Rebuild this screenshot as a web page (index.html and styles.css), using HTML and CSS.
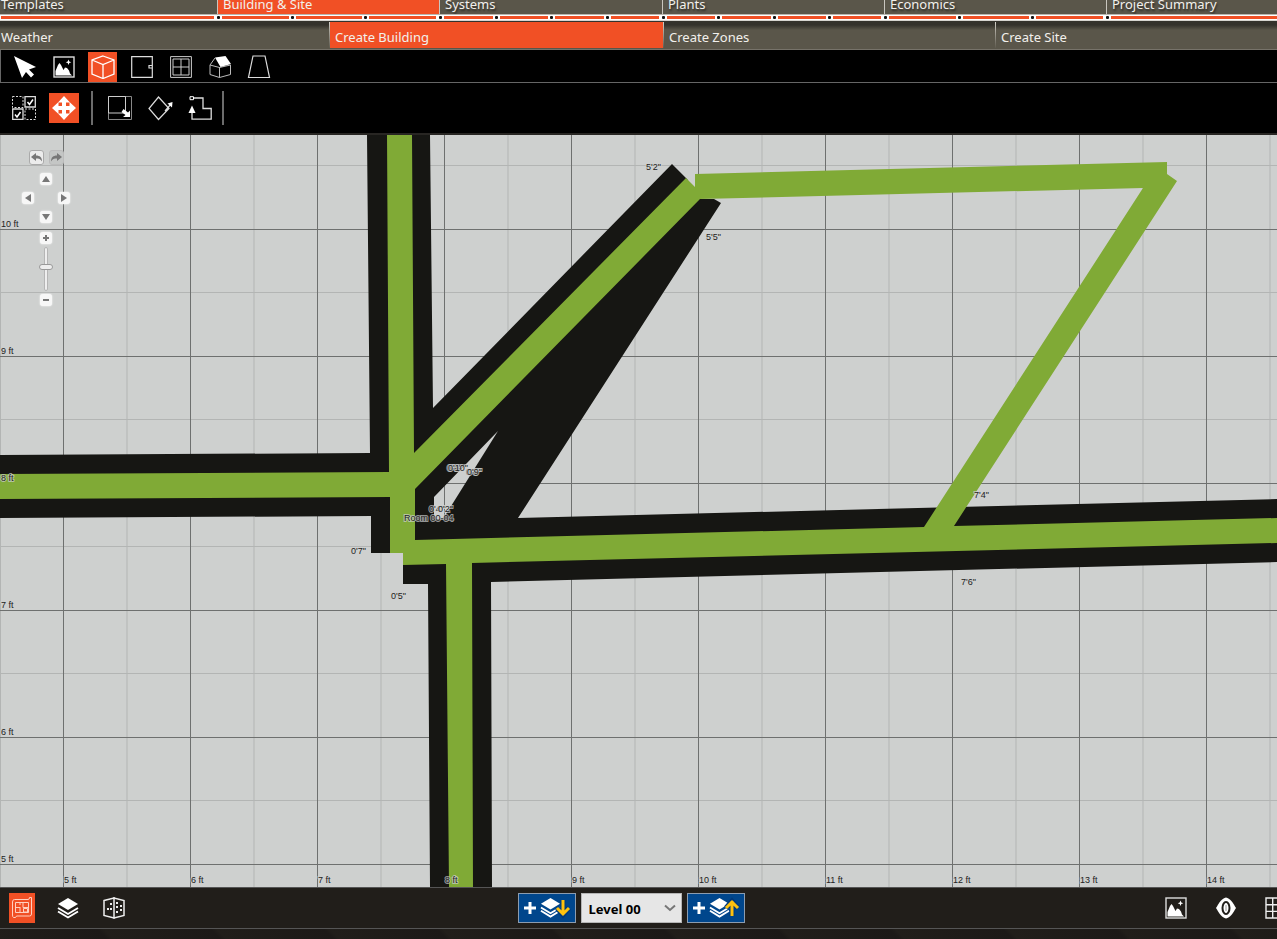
FILE: index.html
```html
<!DOCTYPE html>
<html lang="en">
<head>
<meta charset="utf-8">
<title>Building &amp; Site - Create Building</title>
<link rel="stylesheet" href="styles.css">
</head>
<body>
<svg class="defs" aria-hidden="true">
  <symbol id="picture" viewBox="0 0 22 22"><rect x="1" y="1" width="20" height="20" fill="none" stroke="#ddd" stroke-width="1.4"/><path d="M2.500 19.500V15L5 9l1.500-2L8 9l2.500 5 1.500-2.500 2 .5 2 2.500 1 3 2 2zM15.500 3.500l.8 2 2 .8-2 .8-.8 2-.8-2-2-.8 2-.8z" fill="#fff"/></symbol>
  <symbol id="layers" viewBox="0 0 22 22"><path d="M11 1l10 6-10 6L1 7z" fill="#fff"/><path d="M1 11l10 6 10-6M1 14.500l10 6 10-6" fill="none" stroke="#fff" stroke-width="1.900"/></symbol>
</svg>

<nav class="main-tabs" aria-label="Project steps">
  <a href="#">Templates</a>
  <a href="#" class="active">Building &amp; Site</a>
  <a href="#">Systems</a>
  <a href="#">Plants</a>
  <a href="#">Economics</a>
  <a href="#">Project Summary</a>
</nav>
<div class="progress" aria-hidden="true">
  <div><i></i></div>
  <div><i></i><i></i><i></i></div>
  <div><i></i><i></i><i></i><i></i></div>
  <div><i></i><i></i><i></i><i></i></div>
  <div><i></i><i></i><i></i></div>
  <div><i></i></div>
</div>
<nav class="sub-tabs" aria-label="Building steps">
  <a href="#">Weather</a>
  <a href="#" class="active">Create Building</a>
  <a href="#">Create Zones</a>
  <a href="#">Create Site</a>
</nav>

<div class="toolbar objects" role="toolbar" aria-label="Objects">
  <button aria-label="Select"><svg width="24" height="24" viewBox="0 0 24 24"><path d="M1 1l22 11-7 2.500 5 5-3 3-5-5.500L9 23z" fill="#fff"/></svg></button>
  <button aria-label="Picture"><svg width="22" height="22"><use href="#picture"/></svg></button>
  <button class="active" aria-label="Building block"><svg width="24" height="24" viewBox="0 0 24 24"><path d="M12 1l11 4v14l-11 4.500L1 19V5zM1 5l11 4.500L23 5M12 9.500v14" fill="none" stroke="#fff" stroke-width="1.300"/></svg></button>
  <button aria-label="Door"><svg width="22" height="22" viewBox="0 0 22 22"><path d="M.7.700h20.600v20.600H.7zM21 9.500h-3v2.500h3" fill="none" stroke="#ddd" stroke-width="1.200"/></svg></button>
  <button aria-label="Window"><svg width="22" height="22" viewBox="0 0 22 22"><path d="M.6.6h20.800v20.800H.6zM3 3h16v16H3zM11 3v16M3 11h16" fill="none" stroke="#ccc"/></svg></button>
  <button aria-label="Roof"><svg width="22" height="22" viewBox="0 0 22 22"><path d="M1 9v9.500l9.500 3 11-3V9M10.500 11v10.500M1 9l9.500 2.500M1 9l5-7M10.500 11.500L21.500 9" fill="none" stroke="#bbb"/><path d="M6 1.500L16.500 0 22 8l-10.500 3z" fill="#fff"/></svg></button>
  <button aria-label="Shade"><svg width="24" height="24" viewBox="0 0 24 24"><path d="M6 1h12l4.500 21.500h-21z" fill="none" stroke="#ddd" stroke-width="1.200"/></svg></button>
</div>
<div class="toolbar edits" role="toolbar" aria-label="Editing">
  <div class="group">
    <button aria-label="Multiple selection"><svg width="24" height="24" viewBox="0 0 24 24" fill="none" stroke="#ddd"><path d="M.5.5H11v11H.5zM13 13h10.500v10.500H13z" stroke-dasharray="2 1.500"/><path d="M13 .7h10.300V11H13zM.7 13H11v10.300H.7z" stroke-width="1.300"/><path d="M15.500 6l2 2.500L21 3.500M3 18.500l2 2.500 3.500-5" stroke="#fff" stroke-width="1.500"/></svg></button>
    <button class="active" aria-label="Move"><svg width="24" height="24" viewBox="0 0 24 24"><path d="M12 0l6 6.500h-4V10h3.500V6L24 12l-6.500 6v-4H14v3.500h4L12 24l-6-6.500h4V14H6.500v4L0 12l6.500-6v4H10V6.500H6z" fill="#fff"/></svg></button>
  </div>
  <span class="sep"></span>
  <div class="group">
    <button aria-label="Resize"><svg width="24" height="24" viewBox="0 0 24 24"><path d="M.5.500h23v23H.5z" fill="none" stroke="#888"/><path d="M.5.500H17.500v16.500H.5z" fill="none" stroke="#ccc"/><path d="M15.500 13l4.500 3.500 2-2V21h-7l2.500-2-4-3z" fill="#fff"/></svg></button>
    <button aria-label="Rotate"><svg width="26" height="26" viewBox="0 0 26 26"><path d="M11.500 2L22 13.500 11.500 24.500 2 13.500zM18 16l6-7" fill="none" stroke="#ddd" stroke-width="1.200"/><path d="M20.500 8.500L25.500 7l-.5 5.500z" fill="#fff"/></svg></button>
    <button aria-label="Edit outline"><svg width="24" height="24" viewBox="0 0 24 24"><path d="M4 2h11v10.500h8.200v10.700H4V17" fill="none" stroke="#ddd" stroke-width="1.300"/><path d="M.5 17L4 9.500 7.500 17z" fill="#fff"/><path d="M2 .7h3.500v3H2z" fill="#000" stroke="#fff"/></svg></button>
  </div>
  <span class="sep end"></span>
</div>

<main class="canvas">
  <svg class="drawing" viewBox="0 135 1277 752" preserveAspectRatio="xMinYMin slice" role="img" aria-label="Floor plan">
    <path class="minor" d="M.5 135v752M127 135v752M254 135v752M381 135v752M508 135v752M635 135v752M762 135v752M889 135v752M1016 135v752M1143 135v752M1270 135v752M0 165.500h1277M0 292.500h1277M0 419.500h1277M0 546.500h1277M0 673.500h1277M0 800.500h1277"/>
    <path class="major" d="M63.500 135v752M190.500 135v752M317.500 135v752M444.500 135v752M571.500 135v752M698.500 135v752M825.500 135v752M952.500 135v752M1079.500 135v752M1206.500 135v752M0 229.500h1277M0 356.500h1277M0 483.500h1277M0 610.500h1277M0 737.500h1277M0 864.500h1277"/>
    <path class="wall" fill-rule="evenodd" d="M367 135H430L433 408L672 164L687 179L700 199H714L721 203L518 518L1277 499V562L491 582L492 887H430L428 584H403V553H371V516L0 518V455L370 453ZM498 431L434 497V519H443Z"/>
    <path class="core" d="M387 135H412L414 453L686 178L695 187V174L1167 162V174L1177 181L954 526L1277 518V543L472 563L473 887H449L446 564L403 565V553H390V497L0 499V474L389 472ZM700 199L415 489V540L924 527L1143 188Z"/>
    <g class="labels">
      <text x="1" y="227">10 ft</text><text x="1" y="354">9 ft</text><text x="1" y="481">8 ft</text><text x="1" y="608">7 ft</text><text x="1" y="735">6 ft</text><text x="1" y="862">5 ft</text>
      <text x="64" y="883">5 ft</text><text x="191" y="883">6 ft</text><text x="318" y="883">7 ft</text><text x="445" y="883">8 ft</text><text x="572" y="883">9 ft</text><text x="699" y="883">10 ft</text><text x="826" y="883">11 ft</text><text x="953" y="883">12 ft</text><text x="1080" y="883">13 ft</text><text x="1207" y="883">14 ft</text>
      <text x="646" y="170">5'2"</text><text x="706" y="240">5'5"</text><text x="974" y="498">7'4"</text><text x="961" y="585">7'6"</text><text x="351" y="554">0'7"</text><text x="391" y="599">0'5"</text>
      <text x="447" y="471">0'9"</text><text x="448" y="471">0'10"</text><text x="466" y="475">0'8"</text><text x="467" y="475">0'9"</text><text x="429" y="512">0'4"</text><text x="438" y="512">0'2"</text><text x="404" y="521">Room 00-04</text>
    </g>
  </svg>
  <div class="view-controls">
    <div class="history">
      <button aria-label="Undo"><svg width="11" height="9" viewBox="0 0 11 9"><path d="M0 4L5 0v2.500c4 0 6 2 6 6C9.500 6 8 5.500 5 5.500V8z"/></svg></button>
      <button class="off" aria-label="Redo"><svg width="11" height="9" viewBox="0 0 11 9"><path d="M11 4L6 0v2.500C2 2.500 0 4.500 0 8.500 1.500 6 3 5.500 6 5.500V8z"/></svg></button>
    </div>
    <div class="pan">
      <button class="up" aria-label="Pan up"><svg width="8" height="6" viewBox="0 0 8 6"><path d="M4 0l4 6H0z"/></svg></button>
      <button class="left" aria-label="Pan left"><svg width="6" height="8" viewBox="0 0 6 8"><path d="M0 4l6-4v8z"/></svg></button>
      <button class="right" aria-label="Pan right"><svg width="6" height="8" viewBox="0 0 6 8"><path d="M6 4L0 0v8z"/></svg></button>
      <button class="down" aria-label="Pan down"><svg width="8" height="6" viewBox="0 0 8 6"><path d="M4 6l4-6H0z"/></svg></button>
    </div>
    <div class="zoom">
      <button aria-label="Zoom in"><svg width="8" height="8" viewBox="0 0 8 8"><path d="M3 1h2v2h2v2H5v2H3V5H1V3h2z"/></svg></button>
      <input type="range" aria-label="Zoom level" min="0" max="100" value="45">
      <button aria-label="Zoom out"><svg width="8" height="8" viewBox="0 0 8 8"><path d="M1 3h6v2H1z"/></svg></button>
    </div>
  </div>
</main>

<footer class="bottom-bar">
  <div class="views">
    <button class="active" aria-label="Plan view"><svg width="22" height="22" viewBox="0 0 22 22" fill="none" stroke="#ffd0c0"><path d="M1.500 5q0-2.500 2-2.500H17q1.500 0 1.500-2h2V17q0 2-2 2H6q-1 0-1.500 1.500h-2Q1.500 20 1.500 18z"/><path d="M4.500 5.500h13v10h-13zM4.500 10.500h4.500M9 5.500v2.500M9 10v5.500M12 5.500v5h5.500" /><path d="M12.500 11.500h4V15h-4z"/></svg></button>
    <button aria-label="Levels"><svg width="22" height="22"><use href="#layers"/></svg></button>
    <button aria-label="Building view"><svg width="22" height="22" viewBox="0 0 22 22"><path d="M11 0v22M1 3.500l10-2.500 10 2.500v15L11 21 1 18.500z" fill="none" stroke="#eee" stroke-width="1.500"/><path d="M7 6h2v2H7zM4 11h2v2H4zM7 11h2v2H7zM13 5h2v2h-2zM13 9h2v2h-2zM17 8h2v2h-2zM13 14h2v2h-2zM17 12h2v2h-2z" fill="#eee"/></svg></button>
  </div>
  <div class="levels">
    <button class="add" aria-label="Add level below"><svg width="48" height="24" viewBox="0 0 48 24"><path d="M7 6v12M1 12h12" stroke="#fff" stroke-width="3"/><use href="#layers" x="17" y="1" width="21" height="21"/><path d="M40 4v14M34 12l6 7 6-7" fill="none" stroke="#00397a" stroke-width="5"/><path d="M40 4v14M34 12l6 6 6-6" fill="none" stroke="#ffc20e" stroke-width="3"/></svg></button>
    <div class="select-box">
      <select aria-label="Level"><option>Level 00</option></select>
      <svg width="12" height="8" viewBox="0 0 12 8"><path d="M1 1.500l5 4.500 5-4.500" fill="none" stroke="#777" stroke-width="2"/></svg>
    </div>
    <button class="add" aria-label="Add level above"><svg width="48" height="24" viewBox="0 0 48 24"><path d="M7 6v12M1 12h12" stroke="#fff" stroke-width="3"/><use href="#layers" x="17" y="1" width="21" height="21"/><path d="M40 20V5M34 12l6-7 6 7" fill="none" stroke="#00397a" stroke-width="5"/><path d="M40 20V5M34 12l6-6 6 6" fill="none" stroke="#ffc20e" stroke-width="3"/></svg></button>
  </div>
  <div class="display">
    <button aria-label="Show picture"><svg width="22" height="22"><use href="#picture"/></svg></button>
    <button aria-label="Visibility"><svg width="22" height="22" viewBox="0 0 22 22"><path d="M11 .500C15 1 18 6 21 11c-3 5-6 10-10 10.500C7 21 4 16 1 11 4 6 7 1 11 .500z" fill="#fff"/><ellipse cx="11" cy="11" rx="3.500" ry="6" fill="#fff" stroke="#211e1a" stroke-width="2"/><path d="M11 8v6" stroke="#999" stroke-width="1"/></svg></button>
    <button aria-label="Grid"><svg width="22" height="22" viewBox="0 0 22 22"><path d="M1 1h20v20H1zM7.700 1v20M14.400 1v20M1 7.700h20M1 14.400h20" fill="none" stroke="#eee" stroke-width="1.400"/></svg></button>
  </div>
</footer>
<div class="status"></div>
</body>
</html>
```
FILE: styles.css
```css
* { box-sizing: border-box; }
body {
  margin: 0;
  height: 100vh;
  display: flex;
  flex-direction: column;
  overflow: hidden;
  background: #211e1a;
  font-family: "Noto Sans", "Open Sans", sans-serif;
  font-size: 13px;
}
button {
  display: flex;
  align-items: center;
  justify-content: center;
  flex: none;
  padding: 0;
  border: 0;
  background: none;
}
svg { display: block; flex: none; }
.defs { position: absolute; width: 0; height: 0; }
.active { background: #f15025; }

.main-tabs, .progress {
  display: grid;
  grid-template-columns: 217fr 222fr 223fr 222fr 222fr 171fr;
  flex: none;
}
.main-tabs { height: 14px; background: #5a564a; overflow: hidden; }
.main-tabs a, .sub-tabs a {
  color: #f2f0ec;
  text-decoration: none;
  white-space: nowrap;
  padding-left: 5px;
  border-left: 1px solid #c9c6bf;
}
.main-tabs a {
  height: 24px;
  margin-top: -10px;
  line-height: 28px;
  text-shadow: 1px 2px 2px #2c2a25;
}
.main-tabs a:first-child, .sub-tabs a:first-child { padding-left: 1px; border-left: 0; }
.main-tabs .active { text-shadow: none; }

.progress { height: 7px; background: #fff; border-top: 1px solid #b8b5ae; border-bottom: 1px solid #d6d4d0; }
.progress div { display: flex; padding-left: 1px; }
.progress i {
  position: relative;
  flex: 1;
  height: 3px;
  margin: 1px 3px 0 4px;
  background: #f15025;
}
.progress i::before {
  content: "";
  position: absolute;
  left: -5px;
  top: 0;
  width: 3px;
  height: 3px;
  border-radius: 1px;
  background: #111;
}
.progress div:first-child i { margin-left: 0; }
.progress div:last-child i { margin-right: 0; }

.sub-tabs {
  display: grid;
  grid-template-columns: 329fr 334fr 332fr 282fr;
  flex: none;
  height: 29px;
  padding-top: 1px;
  background: linear-gradient(#34322c 0, #34322c 4px, #5a564a 9px);
  border-bottom: 1px solid #77736a;
}
.sub-tabs a { line-height: 31px; height: 26px; border-image: linear-gradient(#d5d2cb, #5a564a) 1; }

.toolbar { display: flex; align-items: center; flex: none; background: #000; }
.objects { height: 33px; gap: 10px; padding: 2px 0 0 9px; border: 1px solid #666; border-width: 0 0 1px 1px; }
.objects button { width: 29px; height: 30px; }
.edits { height: 52px; padding-left: 9px; border-bottom: 2px solid #282623; }
.group { display: flex; gap: 10px; }
.edits button { width: 30px; height: 30px; }
.sep { width: 2px; height: 34px; margin: 0 12px; background: #6c6c6c; }
.sep.end { margin-left: 7px; }

.canvas { position: relative; flex: 1; min-height: 0; background: #ced0cf; overflow: hidden; }
.drawing { position: absolute; width: 100%; height: 100%; }
.minor { stroke: #b3b5b4; stroke-width: 1; }
.major { stroke: #6e706f; stroke-width: 1; }
.wall { fill: #161613; }
.core { fill: #80aa36; }
.labels {
  font-family: "Liberation Sans", Arial, sans-serif;
  font-size: 9px;
  fill: #222;
  stroke: #ced0cf;
  stroke-opacity: .7;
  stroke-width: 2px;
  paint-order: stroke;
}

.view-controls {
  position: absolute;
  left: 22px;
  top: 15px;
  width: 48px;
  display: flex;
  flex-direction: column;
  align-items: center;
}
.view-controls button { width: 12px; height: 12px; background: #f7f7f7; border-radius: 3px; box-shadow: 0 0 2px #fff; }
.view-controls svg { fill: #777; }
.view-controls .history { display: flex; gap: 5px; }
.view-controls .history button { width: 15px; height: 15px; background: #ececec; border: 1px solid #aaa; box-shadow: none; }
.view-controls .history .off { background: #c4c6c5; border-color: #bbb; }
.pan {
  display: grid;
  grid-template-columns: repeat(3, 12px);
  grid-template-rows: 12px 8px 10px 8px 12px;
  column-gap: 6px;
  margin-top: 8px;
}
.up { grid-area: 1 / 2; }
.left { grid-area: 3 / 1; align-self: center; }
.right { grid-area: 3 / 3; align-self: center; }
.down { grid-area: 5 / 2; }
.zoom { display: flex; flex-direction: column; align-items: center; gap: 3px; margin-top: 9px; }
.zoom input {
  appearance: none;
  writing-mode: vertical-lr;
  width: 14px;
  height: 44px;
  margin: 0;
  background: none;
}
.zoom input::-webkit-slider-runnable-track { width: 4px; height: 44px; border: 1px solid #b5b5b5; border-radius: 2px; background: #eee; }
.zoom input::-webkit-slider-thumb { appearance: none; width: 14px; height: 6px; margin-left: -6px; border: 1px solid #999; border-radius: 3px; background: #eee; }

.bottom-bar {
  display: grid;
  grid-template-columns: 1fr auto 1fr;
  align-items: center;
  flex: none;
  height: 42px;
  border-top: 1px solid #555;
  border-bottom: 1px solid #555;
}
.views { display: flex; gap: 20px; padding-left: 9px; }
.views button { width: 26px; height: 30px; }
.levels { display: flex; gap: 5px; margin-right: 15px; }
.add { width: 58px; height: 30px; background: #00468c; border: 1px solid #8c9caf; }
.select-box { position: relative; }
.select-box select {
  appearance: none;
  width: 101px;
  height: 30px;
  padding: 2px 7px 0;
  border: 1px solid #b5b5b5;
  border-radius: 0;
  background: #e6e6e6;
  color: #000;
  font: bold 13px "Noto Sans", sans-serif;
}
.select-box svg { position: absolute; right: 6px; top: 11px; pointer-events: none; }
.display { display: flex; justify-content: flex-end; gap: 28px; margin-right: -10px; }
.status {
  flex: none;
  height: 10px;
  background: repeating-linear-gradient(45deg, #211e1a 0, #1c1917 76px, #211e1a 80px);
}
```
